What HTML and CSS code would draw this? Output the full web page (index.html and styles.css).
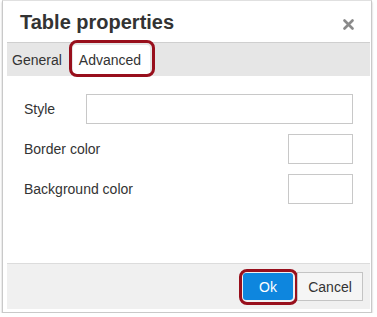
FILE: index.html
```html
<!DOCTYPE html>
<html lang="en">
<head>
    <meta charset="UTF-8">
    <meta name="viewport" content="width=device-width, initial-scale=1.0">
    <title>Table properties</title>
    <link rel="stylesheet" href="styles.css">
</head>
<body>
    <div class="dialog">
        <div class="header">
            <h1>Table properties</h1>
            <svg class="close" width="11" height="11" viewBox="0 0 11 11">
                <path d="M1.5 1.5 L9.5 9.5 M9.5 1.5 L1.5 9.5" stroke="#8a8a8a" stroke-width="2.6" stroke-linecap="round"/>
            </svg>
        </div>
        <div class="tabs">
            <div class="tab">General</div>
            <div class="tab active">Advanced<span class="mark mark-tab"></span></div>
        </div>
        <div class="form">
            <div class="row">
                <label>Style</label>
                <input type="text" class="wide">
            </div>
            <div class="row">
                <label>Border color</label>
                <input type="text" class="small">
            </div>
            <div class="row">
                <label>Background color</label>
                <input type="text" class="small">
            </div>
        </div>
        <div class="footer">
            <button class="ok">Ok<span class="mark mark-btn"></span></button>
            <button class="cancel">Cancel</button>
        </div>
    </div>
</body>
</html>
```

FILE: styles.css
```css
body {
    margin: 0;
    padding: 0 4px 0 2px;
    font-family: "Liberation Sans", Arial, sans-serif;
    background: #fff;
    color: #333;
}
.dialog {
    width: 370px;
    box-sizing: border-box;
    border: 1px solid #c9c9c9;
    border-top: 1px solid #e0e0e0;
    padding: 0 1px 3px 4px;
    background: #fff;
    box-shadow: 0 2px 2px rgba(0, 0, 0, 0.25);
}
.header {
    height: 41px;
    display: flex;
    align-items: center;
    justify-content: space-between;
    padding: 2px 16px 0 13px;
    box-sizing: border-box;
}
.header h1 {
    margin: 0;
    font-size: 20px;
    font-weight: bold;
    color: #333;
}
.close {
    margin-top: 4px;
}
.tabs {
    display: flex;
    align-items: flex-end;
    height: 33px;
    background: #e6e6e6;
    border-top: 1px solid #cfcfcf;
}
.tab {
    position: relative;
    font-size: 14px;
    padding: 0 5px;
    height: 31px;
    line-height: 31px;
}
.tab.active {
    background: #fff;
    margin-left: 6px;
    padding: 0 9px 0 6px;
    border-radius: 3px 3px 0 0;
}
.mark {
    position: absolute;
    border: 3px solid #980f1c;
    border-radius: 8px;
}
.mark-tab {
    left: -4px;
    right: -5px;
    top: -5px;
    bottom: -1px;
}
.form {
    height: 187px;
    box-sizing: border-box;
    padding: 18px 17px 0 17px;
}
.row {
    display: flex;
    align-items: center;
    justify-content: space-between;
    height: 30px;
    margin-bottom: 10px;
}
.row label {
    font-size: 14px;
}
.row input {
    box-sizing: border-box;
    height: 30px;
    border: 1px solid #c8c8c8;
    margin: 0;
}
.wide {
    width: 267px;
}
.small {
    width: 65px;
}
.footer {
    display: flex;
    justify-content: flex-end;
    align-items: center;
    gap: 4px;
    height: 45px;
    padding-right: 7px;
    background: #f0f0f0;
    border-top: 1px solid #dcdcdc;
}
.footer button {
    position: relative;
    font-family: "Liberation Sans", Arial, sans-serif;
    font-size: 14px;
    margin: 0;
    cursor: pointer;
}
.ok {
    width: 50px;
    height: 27px;
    background: #0e86de;
    color: #fff;
    border: none;
    border-radius: 3px;
}
.mark-btn {
    left: -4px;
    right: -5px;
    top: -4px;
    bottom: -5px;
}
.cancel {
    width: 66px;
    height: 29px;
    background: #f5f5f5;
    color: #333;
    border: 1px solid #c4c4c4;
}
```
